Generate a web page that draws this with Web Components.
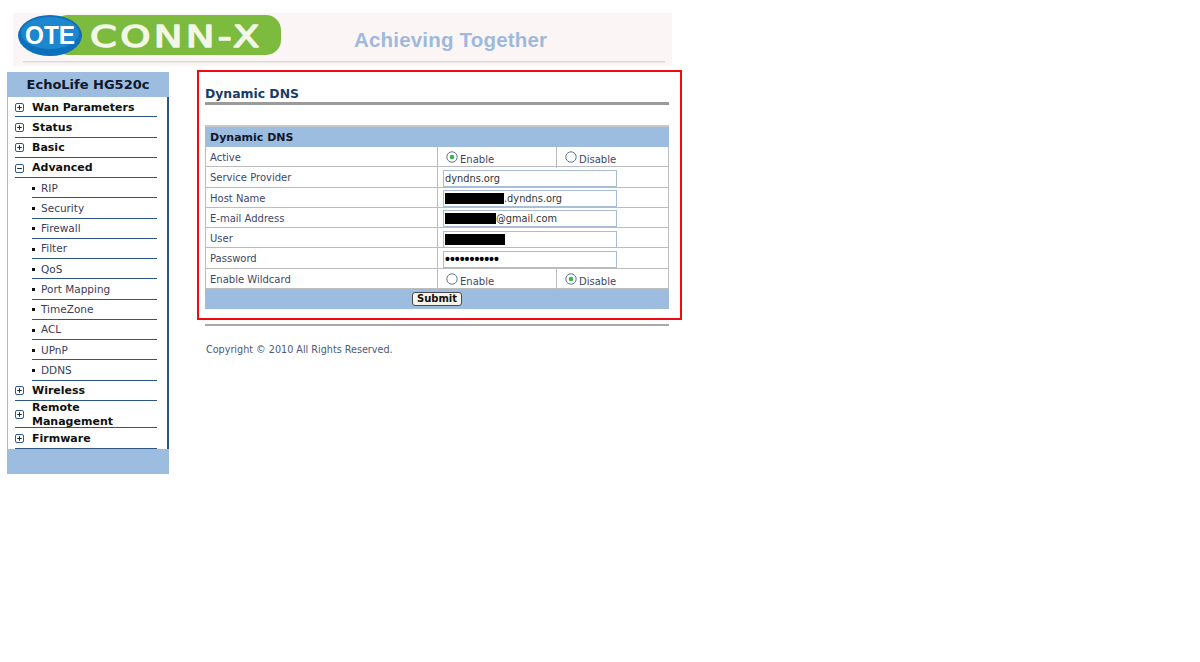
<!DOCTYPE html>
<html>
<head>
<meta charset="utf-8">
<title>Dynamic DNS</title>
<style>
  html, body { margin: 0; background: #fff; }
  body { font-family: "DejaVu Sans", Verdana, sans-serif; width: 1200px; height: 662px; overflow: hidden; }
  .columns { display: flex; align-items: flex-start; padding-left: 7px; }
  .dots { font: 700 14px/15px "Liberation Sans", Arial, sans-serif; color: #000; }
</style>
</head>
<body>
<ote-banner></ote-banner>
<div class="columns">
  <side-menu title-text="EchoLife HG520c">
    <menu-item>Wan Parameters</menu-item>
    <menu-item>Status</menu-item>
    <menu-item>Basic</menu-item>
    <menu-item open>Advanced</menu-item>
    <menu-item sub>RIP</menu-item>
    <menu-item sub>Security</menu-item>
    <menu-item sub>Firewall</menu-item>
    <menu-item sub>Filter</menu-item>
    <menu-item sub>QoS</menu-item>
    <menu-item sub>Port Mapping</menu-item>
    <menu-item sub>TimeZone</menu-item>
    <menu-item sub>ACL</menu-item>
    <menu-item sub>UPnP</menu-item>
    <menu-item sub>DDNS</menu-item>
    <menu-item>Wireless</menu-item>
    <menu-item tall>Remote Management</menu-item>
    <menu-item>Firmware</menu-item>
  </side-menu>
  <ddns-panel>
    <form-row label="Active"><radio-pair first="on"></radio-pair></form-row>
    <form-row label="Service Provider"><text-field>dyndns.org</text-field></form-row>
    <form-row label="Host Name"><text-field><black-bar w="59"></black-bar>.dyndns.org</text-field></form-row>
    <form-row label="E-mail Address"><text-field><black-bar w="51"></black-bar>@gmail.com</text-field></form-row>
    <form-row label="User"><text-field><black-bar w="60"></black-bar></text-field></form-row>
    <form-row label="Password"><text-field><span class="dots">•••••••••••</span></text-field></form-row>
    <form-row label="Enable Wildcard"><radio-pair second="on"></radio-pair></form-row>
  </ddns-panel>
</div>

<script>
class OteBanner extends HTMLElement {
  connectedCallback() {
    this.attachShadow({ mode: 'open' }).innerHTML = `
      <style>
        :host { display: block; width: 659px; height: 53px; margin: 13px 0 4px 13px; background: #fbf6f5; }
        svg { display: block; }
        text { font-family: "Liberation Sans", Arial, sans-serif; }
        .conn { font-family: "DejaVu Sans", Verdana, sans-serif; letter-spacing: 2.6px; stroke: #f2f7e6; stroke-width: 1.4; stroke-linejoin: round; }
      </style>
      <svg width="659" height="53" viewBox="0 0 659 53">
        <rect x="10" y="48" width="642" height="1.5" fill="#dcdad9"/>
        <rect x="40" y="2" width="228" height="40" rx="15" fill="#7cbb3e"/>
        <ellipse cx="37" cy="22.5" rx="32" ry="20.5" fill="#0d70bb"/>
        <ellipse cx="37" cy="20" rx="29" ry="16" fill="#1c86cf"/>
        <text x="37" y="31" text-anchor="middle" font-size="25" font-weight="700" fill="#fff" textLength="50" lengthAdjust="spacingAndGlyphs">OTE</text>
        <text class="conn" transform="translate(77 34) scale(1.28 1)" font-size="30" fill="#f2f7e6">CONN-X</text>
        <text x="341" y="34" font-size="20.5" font-weight="700" fill="#9fb9dc" textLength="193" lengthAdjust="spacing">Achieving Together</text>
      </svg>`;
  }
}

class SideMenu extends HTMLElement {
  connectedCallback() {
    this.attachShadow({ mode: 'open' }).innerHTML = `
      <style>
        :host { display: block; flex: none; width: 162px; margin-top: 2px; }
        .head { height: 25px; background: #9cbce0; color: #10182a; font: 700 13px/26px "DejaVu Sans", Verdana, sans-serif; text-align: center; }
        .list { box-sizing: border-box; height: 352px; padding: 0 10px 0 7px; border-left: 1px solid #9cbce0; border-right: 2px solid #2d5684; }
        .foot { height: 25px; background: #9cbce0; }
      </style>
      <div class="head">${this.getAttribute('title-text')}</div>
      <div class="list"><slot></slot></div>
      <div class="foot"></div>`;
  }
}

class MenuItem extends HTMLElement {
  connectedCallback() {
    const plus = this.hasAttribute('open') ? '' : '<path d="M4.5 2.2v4.6" stroke="#1a2a40"/>';
    const icon = this.hasAttribute('sub')
      ? '<span class="dot"></span>'
      : `<svg width="9" height="9" viewBox="0 0 9 9"><rect x=".5" y=".5" width="8" height="8" rx="1.5" fill="#fff" stroke="#2f5a88"/><path d="M2.2 4.5h4.6" stroke="#1a2a40"/>${plus}</svg>`;
    this.attachShadow({ mode: 'open' }).innerHTML = `
      <style>
        :host { display: flex; align-items: center; box-sizing: border-box; height: 20.25px; padding-top: 1.5px; border-bottom: 1px solid #2d5684; color: #111; font: 700 11px/13.5px "DejaVu Sans", Verdana, sans-serif; }
        :host([sub]) { margin-left: 17px; color: #3c3c58; font-weight: 400; font-size: 10.5px; }
        :host([tall]) { height: 27.5px; }
        .mark { flex: none; display: flex; align-items: center; width: 17px; }
        :host([sub]) .mark { width: 9px; }
        .dot { width: 3px; height: 3px; background: #111; }
        svg { display: block; }
      </style>
      <span class="mark">${icon}</span><span><slot></slot></span>`;
  }
}

class DdnsPanel extends HTMLElement {
  connectedCallback() {
    this.attachShadow({ mode: 'open' }).innerHTML = `
      <style>
        :host { display: block; flex: none; box-sizing: border-box; width: 485px; height: 250px; margin-left: 28px; padding: 0 11px 0 6px; border: 2px solid #f00a14; }
        h1 { box-sizing: border-box; height: 33px; margin: 0; padding-top: 13px; border-bottom: 3px solid #9a9a9a; color: #163c6c; font: 700 12.4px/17px "DejaVu Sans", Verdana, sans-serif; }
        .table { margin-top: 20px; border-top: 2px solid #c8c8c8; }
        .caption { box-sizing: border-box; height: 20px; padding-left: 5px; background: #9cbce0; color: #10182a; font: 700 11px/22px "DejaVu Sans", Verdana, sans-serif; }
        .rows { border-left: 1px solid #bcbcbc; border-right: 1px solid #bcbcbc; }
        .submit { display: flex; justify-content: center; align-items: center; box-sizing: border-box; height: 20px; padding-top: 1px; background: #9cbce0; }
        button { box-sizing: border-box; height: 14px; width: 50px; padding: 0; border: 1px solid #4a4a4a; border-radius: 3px; background: #f6f3ea; color: #111; font: 700 10px/12px "DejaVu Sans", Verdana, sans-serif; }
        .rule { height: 2px; margin-top: 15px; background: #a8a8a8; }
        .copy { margin: 18px 0 0 1px; color: #4c5a78; font: 400 9.65px/12px "DejaVu Sans", Verdana, sans-serif; white-space: nowrap; }
      </style>
      <h1>Dynamic DNS</h1>
      <div class="table">
        <div class="caption">Dynamic DNS</div>
        <div class="rows"><slot></slot></div>
        <div class="submit"><button type="button">Submit</button></div>
      </div>
      <div class="rule"></div>
      <div class="copy">Copyright © 2010 All Rights Reserved.</div>`;
  }
}

class FormRow extends HTMLElement {
  connectedCallback() {
    this.attachShadow({ mode: 'open' }).innerHTML = `
      <style>
        :host { display: grid; grid-template-columns: 232px 1fr; box-sizing: border-box; height: 20.25px; border-bottom: 1px solid #bcbcbc; font: 400 10px/21px "DejaVu Sans", Verdana, sans-serif; color: #3e4668; }
        .label { padding-left: 4px; border-right: 1px solid #bcbcbc; white-space: nowrap; }
        .value { display: flex; align-items: center; min-width: 0; }
      </style>
      <div class="label">${this.getAttribute('label')}</div>
      <div class="value"><slot></slot></div>`;
  }
}

class TextField extends HTMLElement {
  connectedCallback() {
    this.attachShadow({ mode: 'open' }).innerHTML = `
      <style>
        :host { display: flex; align-items: center; box-sizing: border-box; width: 174px; height: 17px; margin: 1px 0 0 5px; padding-left: 1px; border: 1px solid #a9bed6; color: #333; font: 400 9.8px/15px "DejaVu Sans", Verdana, sans-serif; white-space: nowrap; }
      </style>
      <slot></slot>`;
  }
}

class BlackBar extends HTMLElement {
  connectedCallback() {
    this.attachShadow({ mode: 'open' }).innerHTML = `
      <style>
        :host { display: block; flex: none; height: 11px; background: #000; }
      </style>`;
    this.style.width = this.getAttribute('w') + 'px';
  }
}

class RadioPair extends HTMLElement {
  connectedCallback() {
    const radio = (on) => `<svg width="12" height="12" viewBox="0 0 12 12"><circle cx="6" cy="6" r="5.2" fill="#fff" stroke="#5f7890"/>${on ? '<circle cx="6" cy="6" r="2.3" fill="#3fb34f"/>' : ''}</svg>`;
    this.attachShadow({ mode: 'open' }).innerHTML = `
      <style>
        :host { display: grid; grid-template-columns: 118px 1fr; width: 100%; height: 100%; }
        div { display: flex; align-items: flex-start; gap: 2px; padding: 4px 0 0 8px; line-height: 14px; font-size: 10px; }
        div + div { border-left: 1px solid #bcbcbc; }
        span { padding-top: 2px; }
        svg { flex: none; }
      </style>
      <div>${radio(this.hasAttribute('first'))}<span>Enable</span></div>
      <div>${radio(this.hasAttribute('second'))}<span>Disable</span></div>`;
  }
}

customElements.define('ote-banner', OteBanner);
customElements.define('side-menu', SideMenu);
customElements.define('menu-item', MenuItem);
customElements.define('ddns-panel', DdnsPanel);
customElements.define('form-row', FormRow);
customElements.define('text-field', TextField);
customElements.define('black-bar', BlackBar);
customElements.define('radio-pair', RadioPair);
</script>
</body>
</html>
